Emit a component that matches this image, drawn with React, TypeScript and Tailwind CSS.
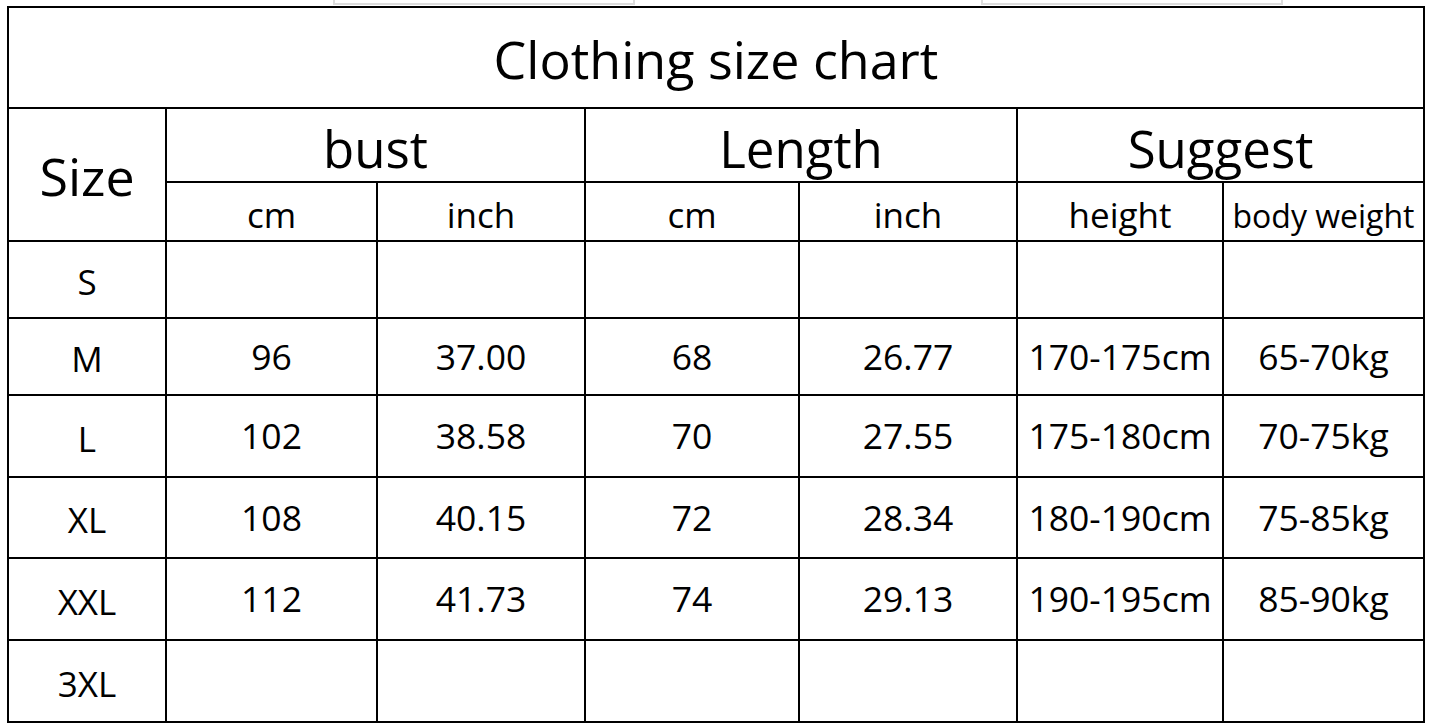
import React from "react";

const rows: { size: string; cells: string[] }[] = [
    { size: "S", cells: ["", "", "", "", "", ""] },
    { size: "M", cells: ["96", "37.00", "68", "26.77", "170-175cm", "65-70kg"] },
    { size: "L", cells: ["102", "38.58", "70", "27.55", "175-180cm", "70-75kg"] },
    { size: "XL", cells: ["108", "40.15", "72", "28.34", "180-190cm", "75-85kg"] },
    { size: "XXL", cells: ["112", "41.73", "74", "29.13", "190-195cm", "85-90kg"] },
    { size: "3XL", cells: ["", "", "", "", "", ""] },
];

const cell = "bg-white flex items-center justify-center text-black";

const App: React.FC = () => {
    return (
        <div className="w-[1434px] h-[724px] bg-white overflow-hidden" style={{ fontFamily: '"Open Sans", "Noto Sans", sans-serif' }}>
            {/* bottoms of the frames above the chart */}
            <div className="flex h-[6px]">
                <div className="ml-[333px] w-[302px] h-[5px] border-x-2 border-b-2 border-[#dcdcdc]" />
                <div className="ml-[346px] w-[302px] h-[5px] border-x-2 border-b-2 border-[#dcdcdc]" />
            </div>
            <div className="ml-[7px] w-[1418px] bg-black p-[2px] grid gap-[2px] grid-cols-[156px_209px_206px_212px_216px_204px_199px] grid-rows-[99px_72px_57px_75px_75px_80px_79px_80px_80px]">
                <div className={`${cell} col-span-7 text-[52px] pt-[2px]`}>Clothing size chart</div>

                <div className={`${cell} row-span-2 text-[52px] pt-[2px]`}>Size</div>
                <div className={`${cell} col-span-2 text-[51px] pt-[6px]`}>bust</div>
                <div className={`${cell} col-span-2 text-[51px] pt-[6px]`}>Length</div>
                <div className={`${cell} col-span-2 text-[51px] pt-[6px]`}>Suggest</div>

                <div className={`${cell} text-[35px] pt-[8px]`}>cm</div>
                <div className={`${cell} text-[35px] pt-[8px]`}>inch</div>
                <div className={`${cell} text-[35px] pt-[8px]`}>cm</div>
                <div className={`${cell} text-[35px] pt-[8px]`}>inch</div>
                <div className={`${cell} text-[35px] pt-[8px]`}>height</div>
                <div className={`${cell} text-[32px] pt-[8px] whitespace-nowrap`}>body weight</div>

                {rows.map((r) => (
                    <React.Fragment key={r.size}>
                        <div className={`${cell} text-[35px] pt-[6px]`}>{r.size}</div>
                        {r.cells.map((c, i) => (
                            <div key={i} className={`${cell} text-[35.5px] whitespace-nowrap`}>
                                {c}
                            </div>
                        ))}
                    </React.Fragment>
                ))}
            </div>
        </div>
    );
};

export default App;
